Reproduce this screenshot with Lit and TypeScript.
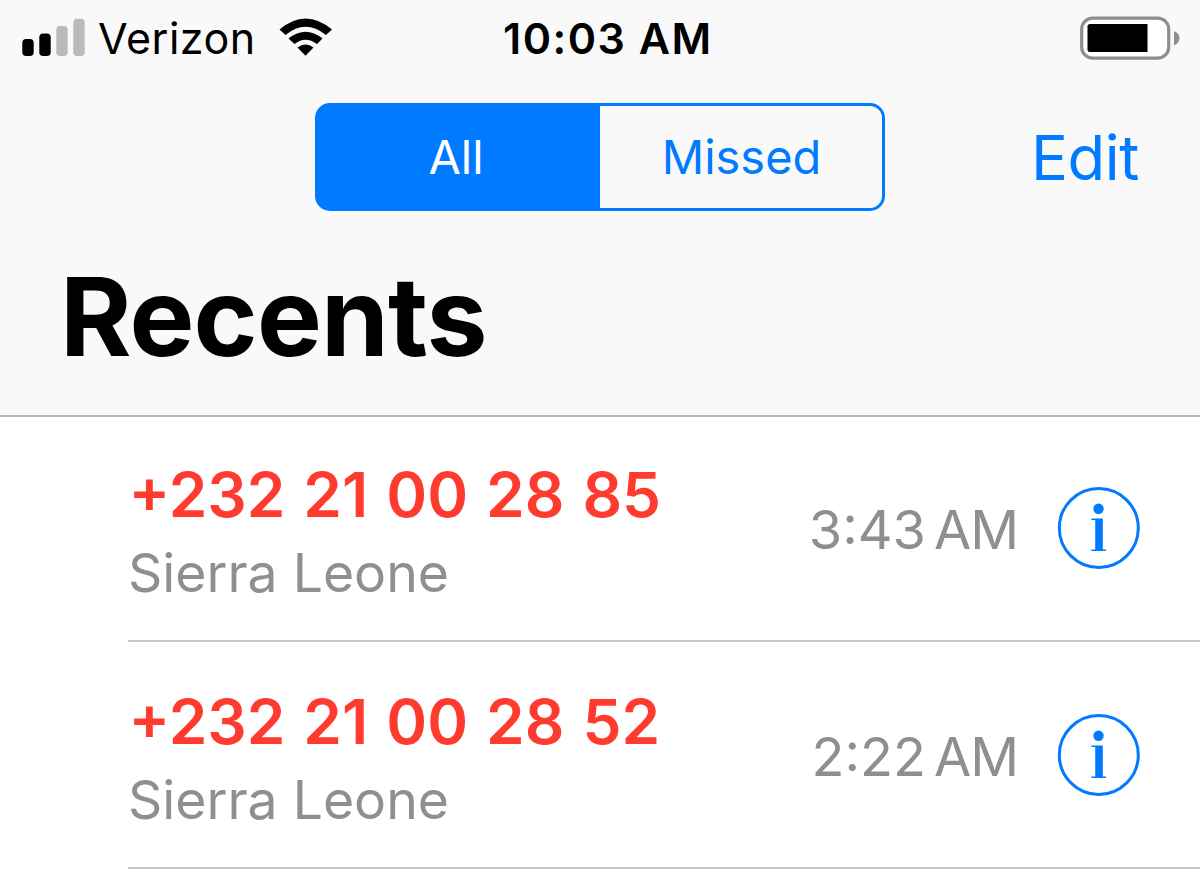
import { LitElement, html, css, svg } from 'lit';
import { customElement, property, state } from 'lit/decorators.js';
import { classMap } from 'lit/directives/class-map.js';

export interface RecentCall {
  number: string;
  location: string;
  time: string;
  period: string;
}

type Filter = 'All' | 'Missed';

@customElement('status-bar')
export class StatusBar extends LitElement {
  static override styles = css`
    :host {
      display: grid;
      grid-template-columns: 503px 1fr auto;
      align-items: center;
      height: 77px;
      padding-right: 20px;
      font-size: 43px;
      line-height: 77px;
      color: #000;
    }

    .left {
      display: flex;
      align-items: center;
      padding-left: 22px;
    }

    .carrier {
      margin-left: 13px;
      width: 181px;
      letter-spacing: 0.5px;
      white-space: nowrap;
    }

    .clock {
      font-weight: 600;
      letter-spacing: 1.5px;
      white-space: nowrap;
    }

    svg {
      display: block;
      flex-shrink: 0;
    }
  `;

  @property({ type: String }) carrier = '';
  @property({ type: String }) time = '';
  @property({ type: Number }) signal = 2;

  override render() {
    return html`
      <div class="left">
        <svg width="63" height="77" viewBox="0 0 63 77">${this._renderBars()}</svg>
        <span class="carrier">${this.carrier}</span>
        <svg width="54" height="77" viewBox="0 0 54 77">
          <path d="M0.5 29.5 Q26.5 7.5 53 29.5 L47 35 Q26.5 18.5 6.5 35 Z" />
          <path d="M9.5 38.5 Q26.5 25 43.5 38.5 L38 44 Q26.5 35.5 15.5 44 Z" />
          <path d="M18.5 47.5 Q26.5 41.5 34.5 47.5 L26.5 55.7 Z" />
        </svg>
      </div>
      <span class="clock">${this.time}</span>
      <svg width="100" height="77" viewBox="0 0 100 77">
        <rect x="1.7" y="18.2" width="87" height="40" rx="11" fill="#fff" stroke="#8e8e8e" stroke-width="3.2" />
        <path d="M10 24 H67.5 V52 H10 Q7.5 52 7.5 49.5 V26.5 Q7.5 24 10 24 Z" />
        <path d="M94 31 Q99.5 33.5 99.5 38.3 Q99.5 43 94 45.5 Z" fill="#8e8e8e" />
      </svg>
    `;
  }

  private _renderBars() {
    const tops = [39, 33.5, 26, 18.7];
    return tops.map(
      (top, i) => svg`<rect
        x=${0.3 + i * 17} y=${top} width="11.4" height=${56 - top} rx="3.8"
        fill=${i < this.signal ? '#000' : '#bababa'}
      />`,
    );
  }
}

@customElement('call-row')
export class CallRow extends LitElement {
  static override styles = css`
    :host {
      display: flex;
      align-items: flex-end;
      box-sizing: border-box;
      margin-left: 128px;
      padding-right: 60px;
      border-bottom: 2px solid #c8c7cc;
    }

    .caller {
      flex: 1;
      padding-bottom: 27px;
      white-space: nowrap;
    }

    .number {
      margin-left: 0.5px;
      font-size: 62px;
      font-weight: 600;
      line-height: 76px;
      letter-spacing: 0;
      word-spacing: 2.4px;
      color: #ff3b30;
    }

    .location {
      font-size: 53.5px;
      line-height: 80px;
      color: #8e8e93;
    }

    .time {
      display: flex;
      gap: 8px;
      margin-right: 39px;
      padding-bottom: 70px;
      font-size: 54px;
      line-height: 80px;
      color: #8e8e93;
    }

    .period {
      letter-spacing: -1px;
    }

    .info {
      display: block;
      padding-bottom: 71px;
    }
  `;

  @property({ attribute: false }) call!: RecentCall;

  override render() {
    const { number, location, time, period } = this.call;
    return html`
      <div class="caller">
        <div class="number">${number}</div>
        <div class="location">${location}</div>
      </div>
      <div class="time"><span>${time}</span><span class="period">${period}</span></div>
      <svg class="info" width="83" height="83" viewBox="0 0 83 83" fill="#007aff">
        <circle cx="41.8" cy="42" r="39.5" fill="none" stroke="#007aff" stroke-width="3" />
        <circle cx="41.5" cy="22.7" r="5.2" />
        <path d="M34.4 32.6 H45.8 V63.4 H49 V64.9 H34.3 V63.4 H38.2 V34.1 H34.4 Z" />
      </svg>
    `;
  }
}

@customElement('app-root')
export class AppRoot extends LitElement {
  static override styles = css`
    :host {
      display: flex;
      flex-direction: column;
      width: 1200px;
      height: 869px;
      overflow: hidden;
      background: #fff;
      font-family: Inter, 'Liberation Sans', sans-serif;
    }

    header {
      box-sizing: border-box;
      height: 417px;
      flex-shrink: 0;
      border-bottom: 2px solid #b9b9bb;
      background: #f9f9f9;
    }

    .nav {
      display: grid;
      grid-template-columns: 1fr 570px 1fr;
      align-items: center;
      padding: 26px 61px 0 60px;
    }

    .segments {
      display: grid;
      grid-template-columns: 1fr 1fr;
      box-sizing: border-box;
      height: 108px;
      border: 3px solid #007aff;
      border-radius: 15px;
      background: linear-gradient(90deg, #007aff 50%, transparent 50%);
      overflow: hidden;
    }

    button {
      border: 0;
      padding: 0;
      background: none;
      font: inherit;
      color: #007aff;
    }

    .segment {
      padding-left: 2px;
      font-size: 47px;
      line-height: 102px;
    }

    .segment.selected {
      padding: 0 5px 0 0;
      background: #007aff;
      color: #fff;
    }

    .edit {
      justify-self: end;
      font-size: 61.5px;
      line-height: 103px;
      letter-spacing: -0.4px;
    }

    h1 {
      margin: 45px 0 0 60px;
      font-size: 109px;
      font-weight: 700;
      line-height: 120px;
      letter-spacing: -0.8px;
    }

    .calls {
      display: grid;
      grid-template-rows: 225px 227px;
    }
  `;

  @state() private _filter: Filter = 'All';

  private _calls: RecentCall[] = [
    { number: '+232 21 00 28 85', location: 'Sierra Leone', time: '3:43', period: 'AM' },
    { number: '+232 21 00 28 52', location: 'Sierra Leone', time: '2:22', period: 'AM' },
  ];

  override render() {
    return html`
      <header>
        <status-bar carrier="Verizon" time="10:03 AM" .signal=${2}></status-bar>
        <div class="nav">
          <span></span>
          <div class="segments">${this._renderSegment('All')}${this._renderSegment('Missed')}</div>
          <button class="edit">Edit</button>
        </div>
        <h1>Recents</h1>
      </header>
      <main class="calls">
        ${this._calls.map((call) => html`<call-row .call=${call}></call-row>`)}
      </main>
    `;
  }

  private _renderSegment(name: Filter) {
    return html`
      <button
        class=${classMap({ segment: true, selected: this._filter === name })}
        @click=${() => (this._filter = name)}
      >${name}</button>
    `;
  }
}

declare global {
  interface HTMLElementTagNameMap {
    'status-bar': StatusBar;
    'call-row': CallRow;
    'app-root': AppRoot;
  }
}
